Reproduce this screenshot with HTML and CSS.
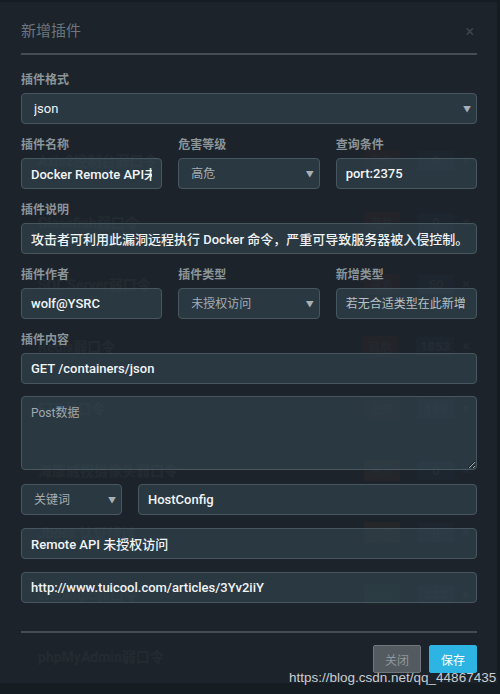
FILE: index.html
```html
<!DOCTYPE html>
<html>
<head>
    <meta charset="utf-8">
    <title>新增插件</title>
    <link rel="stylesheet" href="styles.css">
</head>
<body>
    <div class="plugin-list">
        <div class="plugin-row"><span class="name">Axis2控制台弱口令</span><span class="level high">高危</span><span class="count">0</span><span class="del">×</span></div>
        <div class="plugin-row"><span class="name">Glassfish弱口令</span><span class="level high">高危</span><span class="count">0</span><span class="del">×</span></div>
        <div class="plugin-row"><span class="name">SQL Server弱口令</span><span class="level high">高危</span><span class="count">50</span><span class="del">×</span></div>
        <div class="plugin-row"><span class="name">Redis弱口令</span><span class="level high">高危</span><span class="count">1853</span><span class="del">×</span></div>
        <div class="plugin-row"><span class="name">FTP弱口令</span><span class="level high">高危</span><span class="count">159</span><span class="del">×</span></div>
        <div class="plugin-row"><span class="name">海康威视摄像头弱口令</span><span class="level warn">高危</span><span class="count">0</span><span class="del">×</span></div>
        <div class="plugin-row"><span class="name">Jboss 认证绕过</span><span class="level warn">高危</span><span class="count">0</span><span class="del">×</span></div>
        <div class="plugin-row"><span class="name">Weblogic弱口令</span><span class="level mid">中危</span><span class="count">223</span><span class="del">×</span></div>
        <div class="plugin-row"><span class="name">phpMyAdmin弱口令</span></div>
    </div>

    <div class="backdrop"></div>

    <div class="modal">
        <div class="modal-header">
            <span class="modal-title">新增插件</span>
            <span class="close">×</span>
        </div>

        <div class="modal-body">
            <div class="field">
                <label>插件格式</label>
                <div class="select"><select><option>json</option></select></div>
            </div>

            <div class="field-row">
                <div class="field">
                    <label>插件名称</label>
                    <input class="text" value="Docker Remote API未授权访问">
                </div>
                <div class="field">
                    <label>危害等级</label>
                    <div class="select dim"><select><option>高危</option></select></div>
                </div>
                <div class="field">
                    <label>查询条件</label>
                    <input class="text" value="port:2375">
                </div>
            </div>

            <div class="field">
                <label>插件说明</label>
                <input class="text" value="攻击者可利用此漏洞远程执行 Docker 命令，严重可导致服务器被入侵控制。">
            </div>

            <div class="field-row">
                <div class="field">
                    <label>插件作者</label>
                    <input class="text" value="wolf@YSRC">
                </div>
                <div class="field">
                    <label>插件类型</label>
                    <div class="select dim"><select><option>未授权访问</option></select></div>
                </div>
                <div class="field">
                    <label>新增类型</label>
                    <input class="text" placeholder="若无合适类型在此新增">
                </div>
            </div>

            <div class="field">
                <label>插件内容</label>
                <input class="text" value="GET /containers/json">
            </div>

            <textarea class="post-data" placeholder="Post数据"></textarea>

            <div class="keyword-row">
                <div class="select dim keyword"><select><option>关键词</option></select></div>
                <input class="text" value="HostConfig">
            </div>

            <input class="text spaced" value="Remote API 未授权访问">
            <input class="text spaced" value="http://www.tuicool.com/articles/3Yv2iiY">
        </div>

        <div class="modal-footer">
            <button class="btn btn-close">关闭</button>
            <button class="btn btn-save">保存</button>
        </div>
    </div>

    <div class="watermark">https://blog.csdn.net/qq_44867435</div>
</body>
</html>
```

FILE: styles.css
```css
body {
    margin: 0;
    background-color: #1f262d;
    font-family: Roboto, "Noto Sans CJK SC", sans-serif;
    overflow: hidden;
    height: 694px;
}
.plugin-list {
    padding-top: 129px;
}
.plugin-row {
    display: flex;
    align-items: center;
    height: 62px;
    padding: 0 30px 0 38px;
    color: #dfe4e8;
    font-size: 14px;
    font-weight: bold;
}
.plugin-row .name {
    flex: 1;
}
.level {
    padding: 2px 6px;
    font-size: 12px;
    font-weight: normal;
    border-radius: 2px;
    margin-right: 18px;
}
.level.high {
    background-color: #c9302c;
}
.level.warn {
    background-color: #e0731c;
}
.level.mid {
    background-color: #3f9a3f;
}
.count {
    min-width: 28px;
    padding: 2px 4px;
    background-color: #2b6ea8;
    color: #ffffff;
    text-align: center;
    font-size: 13px;
    margin-right: 8px;
}
.del {
    font-weight: normal;
    font-size: 15px;
}
.backdrop {
    position: absolute;
    top: 0;
    left: 0;
    width: 500px;
    height: 694px;
    background-color: rgba(22, 28, 33, 0.88);
}
.modal {
    position: absolute;
    top: 2px;
    left: 0;
    width: 497px;
    height: 681px;
    box-sizing: border-box;
    padding: 0 20px 0 21px;
    background-color: rgba(31, 38, 45, 0.7);
}
.modal-header {
    display: flex;
    justify-content: space-between;
    align-items: center;
    padding: 19px 0 12px;
    border-bottom: 2px solid #454d53;
}
.modal-title {
    font-size: 15px;
    line-height: 20px;
    color: #6d767c;
}
.close {
    color: #3f474d;
    font-size: 16px;
    margin-right: 3px;
}
.modal-body {
    padding-top: 16px;
}
.field {
    display: flex;
    flex-direction: column;
    margin-bottom: 12px;
}
.field label {
    font-size: 12px;
    line-height: 18px;
    margin-bottom: 4px;
    color: #8b9499;
    font-weight: bold;
}
.field-row {
    display: grid;
    grid-template-columns: 1fr 1fr 1fr;
    gap: 16px;
}
.text,
.select select,
.post-data {
    box-sizing: border-box;
    width: 100%;
    height: 31px;
    padding: 0 9px;
    background-color: rgba(55, 75, 85, 0.55);
    border: 1px solid #47575f;
    border-radius: 4px;
    color: #f1f4f6;
    font-family: Roboto, "Noto Sans CJK SC", sans-serif;
    font-size: 13px;
    font-weight: 500;
    outline: none;
}
.text::placeholder,
.post-data::placeholder {
    color: #b9c0c4;
    font-size: 12px;
    font-weight: normal;
}
.select {
    position: relative;
}
.select select {
    appearance: none;
    -webkit-appearance: none;
    padding-left: 12px;
    font-weight: normal;
}
.select.dim select {
    color: #a5adb2;
    font-size: 12px;
}
.select::after {
    content: "▼";
    position: absolute;
    right: 6px;
    top: 10px;
    font-size: 8px;
    color: #a8b0b5;
}
.post-data {
    display: block;
    height: 74px;
    padding-top: 6px;
    resize: vertical;
}
.post-data::placeholder {
    color: #9fa8ad;
}
.keyword-row {
    display: grid;
    grid-template-columns: 101px 1fr;
    gap: 16px;
    margin-top: 14px;
}
.spaced {
    display: block;
    margin-top: 13px;
}
.modal-footer {
    display: flex;
    justify-content: flex-end;
    gap: 8px;
    margin-top: 28px;
    padding-top: 12px;
    border-top: 2px solid #454d53;
}
.btn {
    height: 28px;
    padding: 0 11px;
    font-family: Roboto, "Noto Sans CJK SC", sans-serif;
    font-size: 12px;
    border-radius: 2px;
}
.btn-close {
    width: 48px;
    background-color: #545b60;
    border: 1px solid #70777c;
    color: #8f979c;
}
.btn-save {
    width: 48px;
    background-color: #2db4e3;
    border: 1px solid #2db4e3;
    color: #ffffff;
}
.watermark {
    position: absolute;
    left: 289px;
    top: 670px;
    font-family: "Liberation Sans", Arial, sans-serif;
    font-size: 13.5px;
    color: rgba(235, 238, 240, 0.85);
}
```
